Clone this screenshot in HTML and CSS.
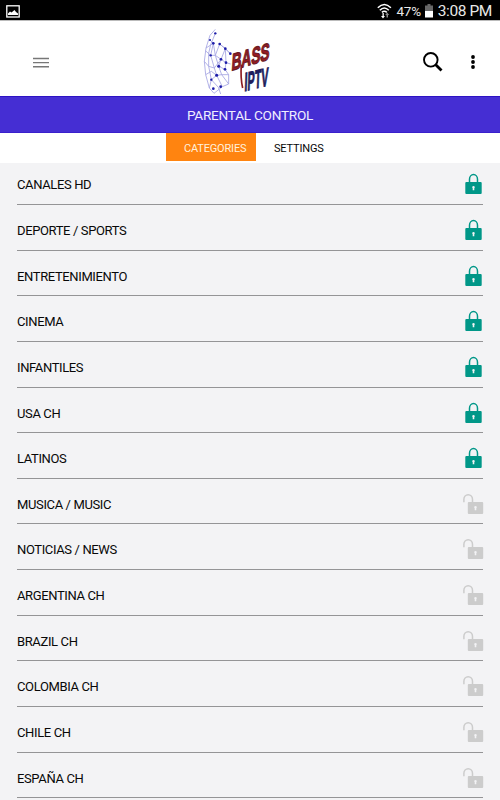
FILE: index.html
```
<!DOCTYPE html>
<html lang="en">
<head>
<meta charset="utf-8">
<title>Parental Control</title>
<link rel="stylesheet" href="styles.css">
</head>
<body>
<svg class="defs" width="0" height="0">
  <symbol id="locked" viewBox="0 0 22 22">
    <path d="M6.500 10V6.300a4 4.800 0 0 1 8 0V10" fill="none" stroke="currentColor" stroke-width="1.500"/>
    <rect x="2.300" y="9" width="16.400" height="12" rx="1" fill="currentColor"/>
    <path d="M10.500 13a1.300 1.300 0 0 1 .8 2.300v2h-1.600v-2a1.300 1.300 0 0 1 .8-2.300z" fill="#f3f3f5"/>
  </symbol>
  <symbol id="unlocked" viewBox="0 0 22 22">
    <path d="M.9 9.300V6.300a4.300 4.600 0 0 1 8.600 0V10" fill="none" stroke="currentColor" stroke-width="1.500"/>
    <rect x="4.800" y="9" width="15.400" height="12" rx="1" fill="currentColor"/>
    <path d="M12.500 13a1.300 1.300 0 0 1 .8 2.300v2h-1.600v-2a1.300 1.300 0 0 1 .8-2.300z" fill="#f3f3f5"/>
  </symbol>
</svg>
<div class="status">
  <svg class="picture" width="14" height="13" viewBox="0 0 14 13"><rect x=".8" y=".8" width="12.400" height="11.200" fill="none" stroke="#fff" stroke-width="1.300"/><path d="M2 10V8.500l2-2 1.500 1L8.500 5l1.500 2 2 1.500V10z" fill="#fff"/></svg>
  <svg class="wifi" width="15" height="16" viewBox="0 0 15 16"><g fill="none" stroke="#fff" stroke-width="1.500"><path d="M.8 4.800Q7.300-1.800 13.900 4.800M2.800 7.200q4.500-4.500 9 0M4.900 9.400q2.400-2.400 4.900 0"/></g><path d="M5.500 10v3H4l2 2.500L8 13H6.800v-3z" fill="#fff"/><path d="M9.500 14.500V12H8.200l2-2.500 2 2.500H11v2.500z" fill="#888"/></svg>
  <span class="percent">47%</span>
  <svg class="battery" width="8" height="14" viewBox="0 0 8 14"><path d="M2.500 0h3v1.500H8V7H0V1.500h2.500z" fill="#666"/><path d="M0 7h8v6.500H0z" fill="#fff"/></svg>
  <span class="clock">3:08 PM</span>
</div>
<header class="bar">
  <svg class="menu" width="16" height="12" viewBox="0 0 16 12"><path d="M0 1.500h16M0 5.600h16M0 9.700h16" stroke="#777" stroke-width="1.400"/></svg>
  <svg class="logo" width="100" height="75" viewBox="0 9 300 225">
    <g fill="none" stroke="#a3a3e2" stroke-width="2.500">
      <path d="M76 34L60 52 48 90 43 130 47 170 58 210 72 226"/>
      <path d="M76 46L62 80 56 106 56 145 64 185 85 208 92 228"/>
      <path d="M60 66L70 76 62 112 73 150 80 172 97 206"/>
      <path d="M89 78L76 112 86 145 95 170 116 198"/>
      <path d="M89 78L106 92 93 124 86 145M106 92L121 107 M106 92L108 134 105 154 116 170 116 198"/>
      <path d="M48 90L70 76M46 98L62 112 76 112 93 124 108 134 122 138M70 76L76 112M43 130L56 145 73 150 93 124M89 78L106 92 121 107M86 145L105 154M47 170L64 160 80 172 95 170 116 170M58 210L64 185 80 172M72 226L97 206 116 198"/>
    </g>
    <g fill="#1c1ca8"><circle cx="76" cy="46" r="3.500"/><circle cx="60" cy="66" r="3"/><circle cx="70" cy="76" r="4"/><circle cx="89" cy="78" r="4"/><circle cx="106" cy="92" r="4"/><circle cx="121" cy="107" r="4"/><circle cx="62" cy="112" r="3.500"/><circle cx="93" cy="124" r="4"/><circle cx="108" cy="134" r="4"/><circle cx="86" cy="145" r="4.500"/><circle cx="105" cy="154" r="4"/><circle cx="80" cy="172" r="4.500"/><circle cx="92" cy="206" r="4"/><circle cx="70" cy="212" r="4"/><circle cx="64" cy="185" r="3.500"/></g>
    <g transform="translate(124 158) skewY(-17) skewX(-4)"><text class="bass" textLength="113" lengthAdjust="spacingAndGlyphs">BASS</text></g>
    <path d="M154 140q-3 40 4 70" stroke="#8c1c20" stroke-width="5" fill="none"/>
    <g transform="translate(163 220) skewY(-14) skewX(-2)"><text class="iptv" textLength="71" lengthAdjust="spacingAndGlyphs">IPTV</text></g>
  </svg>
  <svg class="search" width="20" height="20" viewBox="0 0 20 20"><circle cx="7.800" cy="7.800" r="6.800" fill="none" stroke="#000" stroke-width="1.900"/><path d="M12.500 12.500l6 6" stroke="#000" stroke-width="2.800"/></svg>
  <svg class="more" width="4" height="14" viewBox="0 0 4 14"><g fill="#000"><circle cx="2" cy="2" r="1.900"/><circle cx="2" cy="7" r="1.900"/><circle cx="2" cy="12" r="1.900"/></g></svg>
</header>
<h1 class="title">PARENTAL CONTROL</h1>
<nav class="tabs"><span class="tab active">CATEGORIES</span><span class="tab">SETTINGS</span></nav>
<ul class="list">
  <li class="row">CANALES HD<svg class="lock"><use href="#locked"/></svg></li>
  <li class="row">DEPORTE / SPORTS<svg class="lock"><use href="#locked"/></svg></li>
  <li class="row">ENTRETENIMIENTO<svg class="lock"><use href="#locked"/></svg></li>
  <li class="row">CINEMA<svg class="lock"><use href="#locked"/></svg></li>
  <li class="row">INFANTILES<svg class="lock"><use href="#locked"/></svg></li>
  <li class="row">USA CH<svg class="lock"><use href="#locked"/></svg></li>
  <li class="row">LATINOS<svg class="lock"><use href="#locked"/></svg></li>
  <li class="row">MUSICA / MUSIC<svg class="lock"><use class="open" href="#unlocked"/></svg></li>
  <li class="row">NOTICIAS / NEWS<svg class="lock"><use class="open" href="#unlocked"/></svg></li>
  <li class="row">ARGENTINA CH<svg class="lock"><use class="open" href="#unlocked"/></svg></li>
  <li class="row">BRAZIL CH<svg class="lock"><use class="open" href="#unlocked"/></svg></li>
  <li class="row">COLOMBIA CH<svg class="lock"><use class="open" href="#unlocked"/></svg></li>
  <li class="row">CHILE CH<svg class="lock"><use class="open" href="#unlocked"/></svg></li>
  <li class="row">ESPAÑA CH<svg class="lock"><use class="open" href="#unlocked"/></svg></li>
</ul>
</body>
</html>
```
FILE: styles.css
```
* { box-sizing: border-box; }
body { margin: 0; height: 800px; overflow: hidden; background: #f3f3f5; color: #080808; font-family: Roboto, sans-serif; }
svg { display: block; flex: none; }
.defs { position: absolute; }
.status { height: 20px; background: #000; color: #e8e8e8; display: flex; align-items: center; padding: 2px 8px 0 6px; }
.wifi { margin-left: auto; }
.percent { font-size: 13.5px; margin: 0 4px 0 5px; line-height: 18px; letter-spacing: -.3px; }
.clock { font-size: 15.5px; line-height: 18px; margin-left: 5px; white-space: nowrap; letter-spacing: -.4px; }
.bar { height: 76px; background: #fff; border-top: 1px solid #bbb; display: flex; align-items: center; padding: 0 25px 0 33px; }
.menu { margin-top: 9px; }
.logo { margin-left: 141px; overflow: visible; }
.search { margin: 6px 28px 0 auto; }
.more { margin-top: 6px; }
.bass, .iptv { font-family: "Liberation Sans", sans-serif; font-weight: bold; }
.bass { font-size: 70px; fill: #9c1b20; stroke: #6c1c26; stroke-width: 4px; }
.iptv { font-size: 78px; fill: #1d1d5c; stroke: #1d1d5c; stroke-width: 3px; }
.title { margin: 0; height: 37px; line-height: 37px; text-align: center; font-size: 13.6px; letter-spacing: -.25px; font-weight: 400; color: #f0edff; background: #452ed3; border-top: 1px solid #2d12c4; border-bottom: 1px solid #3a20cc; }
.tabs { height: 30px; background: #fff; display: flex; padding-left: 166px; font-size: 11px; letter-spacing: -.17px; }
.tab { height: 28px; line-height: 31px; padding-left: 18px; }
.active { width: 90px; background: #ff8410; color: #fff0dc; }
.list { margin: 0; padding: 0 17px; list-style: none; }
.row { height: 45.63px; border-bottom: 1px solid #949496; display: flex; align-items: flex-end; justify-content: space-between; padding-bottom: 8.600px; font-size: 13px; letter-spacing: -.37px; line-height: 20px; }
.row:first-child { height: 42px; }
.lock { width: 22px; height: 22px; color: #009788; margin-right: -2px; }
.open { color: #ccc; }
```
